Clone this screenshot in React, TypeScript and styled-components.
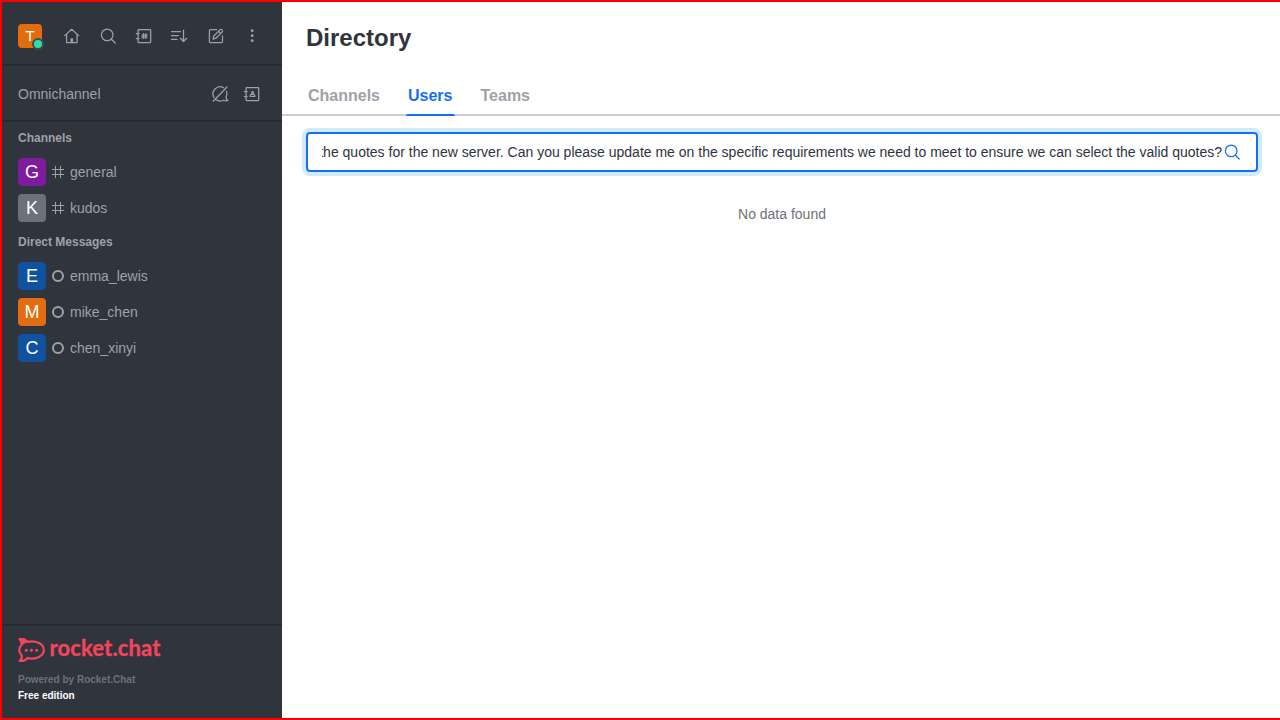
import React from 'react';
import styled, { createGlobalStyle } from 'styled-components';

const GlobalStyle = createGlobalStyle`
  *, *::before, *::after { box-sizing: border-box; }
  body {
    margin: 0;
    font-family: "Liberation Sans", Arial, sans-serif;
    font-size: 14px;
    line-height: 20px;
    overflow: hidden;
  }
`;

const Page = styled.div`
  display: flex;
  width: 100vw;
  height: 100vh;
  border: 2px solid #ff0000;
  border-right: 0;
  background: #fff;
`;

const Sidebar = styled.aside`
  display: flex;
  flex-direction: column;
  flex: 0 0 280px;
  background: #2f343d;
  color: #9ea2a8;
`;

const Toolbar = styled.header`
  display: flex;
  align-items: center;
  justify-content: space-between;
  height: 64px;
  flex-shrink: 0;
  padding: 6px 16px 0;
  border-bottom: 2px solid #272b33;
`;

const Avatar = styled.div<{ $color: string; $size: number }>`
  position: relative;
  display: flex;
  align-items: center;
  justify-content: center;
  flex-shrink: 0;
  width: ${(p) => p.$size}px;
  height: ${(p) => p.$size}px;
  border-radius: 4px;
  background: ${(p) => p.$color};
  color: #fff;
  font-size: ${(p) => (p.$size === 24 ? 15.5 : 18)}px;
`;

const Presence = styled.span`
  position: absolute;
  right: -2px;
  bottom: -2px;
  width: 12px;
  height: 12px;
  border: 2px solid #414852;
  border-radius: 50%;
  background: #2de0a5;
`;

const Actions = styled.div`
  display: flex;
  gap: 8px;
`;

const IconButton = styled.button`
  display: flex;
  align-items: center;
  justify-content: center;
  width: 28px;
  height: 28px;
  padding: 0;
  border: 0;
  background: none;
  color: inherit;
`;

const Glyph = styled.svg<{ $stroke?: number }>`
  display: block;
  flex-shrink: 0;
  fill: none;
  stroke: currentColor;
  stroke-width: ${(p) => p.$stroke ?? 1.25};
  stroke-linecap: round;
  stroke-linejoin: round;
`;

const Omnichannel = styled.section`
  display: flex;
  align-items: center;
  justify-content: space-between;
  height: 56px;
  flex-shrink: 0;
  padding: 0 16px;
  border-bottom: 2px solid #272b33;
`;

const OmniActions = styled(Actions)`
  gap: 4px;
  padding-top: 2px;
`;

const OmniLabel = styled.span`
  padding-top: 1px;
`;

const RoomList = styled.nav`
  flex: 1;
`;

const GroupTitle = styled.h2`
  margin: 0;
  height: 32px;
  padding: 0 16px;
  font-size: 12px;
  font-weight: 700;
  line-height: 32px;
`;

const Room = styled.a`
  display: flex;
  align-items: center;
  height: 36px;
  padding: 0 16px;
`;

const RoomIcon = styled.span`
  margin: 0 4px;
`;

const Footer = styled.footer`
  height: 94px;
  padding: 12px 16px 0;
  border-top: 2px solid #272b33;
  font-size: 10px;
  font-weight: 700;
  line-height: 16px;
`;

const Logo = styled.div`
  display: flex;
  height: 24px;
  margin-bottom: 10px;
  color: #f5455c;
`;

const Wordmark = styled.svg`
  display: block;
  overflow: visible;
  fill: currentColor;
  font-family: Lato, sans-serif;
  font-size: 22px;
  font-weight: 700;
`;

const Powered = styled.div`
  color: #6c727a;
`;

const Edition = styled.div`
  color: #fff;
`;

const Main = styled.main`
  flex: 1;
  min-width: 0;
  color: #2f343d;
`;

const Title = styled.h1`
  margin: 0;
  padding: 20px 24px 0;
  height: 75px;
  font-size: 24px;
  line-height: 32px;
`;

const Tabs = styled.div`
  display: flex;
  gap: 24px;
  height: 39px;
  padding: 0 24px;
  box-shadow: inset 0 -2px 0 #cbced1;
`;

const Tab = styled.button<{ $active?: boolean }>`
  position: relative;
  height: 39px;
  padding: 0 2px 2px;
  border: 0;
  background: none;
  color: ${(p) => (p.$active ? '#156ff5' : '#9ea2a8')};
  font: 700 16px/37px "Liberation Sans", Arial, sans-serif;

  &::after {
    content: '';
    position: absolute;
    inset: auto 0 0;
    height: 2px;
    border-radius: 2px 2px 0 0;
    background: ${(p) => (p.$active ? '#156ff5' : 'transparent')};
  }
`;

const SearchField = styled.div`
  display: flex;
  align-items: center;
  height: 40px;
  margin: 16px 22px 0 24px;
  padding: 0 14px;
  border: 2px solid #156ff5;
  border-radius: 4px;
  box-shadow: 0 0 0 4px #d1ebfe;
`;

const SearchText = styled.div`
  display: flex;
  justify-content: flex-end;
  flex: 1;
  min-width: 0;
  overflow: hidden;
  white-space: nowrap;
`;

const SearchIcon = styled.span`
  color: #156ff5;
`;

const Empty = styled.p`
  margin: 32px 22px 0 24px;
  color: #6c727a;
  text-align: center;
`;

const Search = () => (
  <Glyph width="20" height="20" viewBox="0 0 20 20">
    <circle cx="9.2" cy="8.9" r="5.8" />
    <path d="M13.4 13.2 17.2 17" />
  </Glyph>
);

const Home = () => (
  <Glyph width="20" height="20" viewBox="0 0 20 20">
    <path d="M2.7 9.6 9.7 3.3l7 6.3M4.6 8.4v8.1H15V8.4" />
    <path d="M8.8 16V12.6h2V16z" fill="currentColor" strokeWidth=".6" />
  </Glyph>
);

const Book = ({ children }: { children: React.ReactNode }) => (
  <Glyph width="20" height="20" viewBox="0 0 20 20">
    <path d="M4.6 3.6h11.6q.5 0 .5.5v11.9q0 .5-.5.5H4.6q-.5 0-.5-.5V4.1q0-.5.5-.5zM2.3 7.5h2.8M2.3 12.5h2.8" />
    {children}
  </Glyph>
);

const Directory = () => (
  <Book>
    <path d="M9.6 7.7 9.2 12.5M12 7.7l-.4 4.8M8 9.1h5.2M7.8 11.1h5.2" strokeWidth="1.2" />
  </Book>
);

const Contacts = () => (
  <Book>
    <circle cx="10.5" cy="8.6" r="1" strokeWidth="1.2" />
    <path d="M8.1 12.5v-.7c0-.9.8-1.4 2.4-1.4s2.4.5 2.4 1.4v.7z" strokeWidth="1.2" />
  </Book>
);

const Sort = () => (
  <Glyph width="20" height="20" viewBox="0 0 20 20">
    <path d="M1.5 5.5h9M1.5 9.5h7M1.5 13.4h5.5M13.5 4v11.2M10.4 12.3l3.1 3.2 3.1-3.2" />
  </Glyph>
);

const Compose = () => (
  <Glyph width="20" height="20" viewBox="0 0 20 20">
    <path d="M10.6 3.7H4.3q-.9 0-.9.9v11q0 .9.9.9h11.3q.9 0 .9-.9V9.8" />
    <path d="M7 13.1l.8-3.1 6-6.1c.8-.8 1.6-.7 2.3 0s.7 1.5 0 2.2L9.9 12.2zM12.5 5.2l2.2 2.2" />
  </Glyph>
);

const Kebab = () => (
  <Glyph width="20" height="20" viewBox="0 0 20 20">
    <g fill="currentColor" stroke="none">
      <circle cx="10.2" cy="4.7" r="1.4" />
      <circle cx="10.2" cy="9.7" r="1.4" />
      <circle cx="10.2" cy="14.7" r="1.4" />
    </g>
  </Glyph>
);

const ChatOff = () => (
  <Glyph width="20" height="20" viewBox="0 0 20 20">
    <path d="M13.6 3.8A7.1 7.1 0 0 0 4 13.6M5.7 15.6c2.2 1.7 5.6 1.9 8 .6 1.4.6 3 .7 4.1.2-1.1-.7-1.7-1.9-1.8-3 1.1-1.9 1.4-4 .5-6.1M17 3 3.2 17.2" />
  </Glyph>
);

const Hash = () => (
  <Glyph width="16" height="16" viewBox="0 0 16 16" $stroke={1}>
    <path d="M5.5 2.3v11.4M10.5 2.3v11.4M2.3 5.5h11.4M2.3 10.5h11.4" />
  </Glyph>
);

const Offline = () => (
  <Glyph width="16" height="16" viewBox="0 0 16 16" $stroke={2}>
    <circle cx="8" cy="8" r="5" />
  </Glyph>
);

const RoomItem = ({ name, color, direct }: { name: string; color: string; direct?: boolean }) => (
  <Room>
    <Avatar $size={28} $color={color}>{name[0].toUpperCase()}</Avatar>
    <RoomIcon>{direct ? <Offline /> : <Hash />}</RoomIcon>
    {name}
  </Room>
);

const toolbarIcons = [Home, Search, Directory, Sort, Compose, Kebab];

export default function App() {
  return (
    <Page>
      <GlobalStyle />
      <Sidebar>
        <Toolbar>
          <Avatar $size={24} $color="#e26d0e">T<Presence /></Avatar>
          <Actions>
            {toolbarIcons.map((Icon, i) => (
              <IconButton key={i}><Icon /></IconButton>
            ))}
          </Actions>
        </Toolbar>
        <Omnichannel>
          <OmniLabel>Omnichannel</OmniLabel>
          <OmniActions>
            <IconButton><ChatOff /></IconButton>
            <IconButton><Contacts /></IconButton>
          </OmniActions>
        </Omnichannel>
        <RoomList>
          <GroupTitle>Channels</GroupTitle>
          <RoomItem name="general" color="#7f1b9f" />
          <RoomItem name="kudos" color="#6c727a" />
          <GroupTitle>Direct Messages</GroupTitle>
          <RoomItem name="emma_lewis" color="#10529e" direct />
          <RoomItem name="mike_chen" color="#e26d0e" direct />
          <RoomItem name="chen_xinyi" color="#10529e" direct />
        </RoomList>
        <Footer>
          <Logo>
            <Wordmark width="142" height="24" viewBox="0 0 142 24">
              <path
                d="M1.6 22.8C3.7 21.2 4.3 19 3.6 17.2.5 14.2.5 9.9 3.6 6.8 4 5.2 3.6 3.2 1.6 1.2 4.8.8 7.8 1.8 9.4 3.8 17 2.3 25.8 5.4 25.8 12S17 21.7 9.4 20.2C7.8 22.2 4.8 23.2 1.6 22.8z"
                fill="none"
                stroke="currentColor"
                strokeWidth="2.2"
                strokeLinejoin="round"
              />
              <path d="M.2.5C4-.6 8 .5 10.2 3.4L4.2 7C3.7 4 2.5 2 .2.5z" />
              <circle cx="8.2" cy="12.2" r="1.5" />
              <circle cx="13.4" cy="12.2" r="1.5" />
              <circle cx="18.6" cy="12.2" r="1.5" />
              <text x="31.4" y="18.4" textLength="111" lengthAdjust="spacing" stroke="currentColor" strokeWidth=".3">rocket.chat</text>
            </Wordmark>
          </Logo>
          <Powered>Powered by Rocket.Chat</Powered>
          <Edition>Free edition</Edition>
        </Footer>
      </Sidebar>
      <Main>
        <Title>Directory</Title>
        <Tabs>
          <Tab>Channels</Tab>
          <Tab $active>Users</Tab>
          <Tab>Teams</Tab>
        </Tabs>
        <SearchField>
          <SearchText>
            <span>the quotes for the new server. Can you please update me on the specific requirements we need to meet to ensure we can select the valid quotes?</span>
          </SearchText>
          <SearchIcon><Search /></SearchIcon>
        </SearchField>
        <Empty>No data found</Empty>
      </Main>
    </Page>
  );
}
